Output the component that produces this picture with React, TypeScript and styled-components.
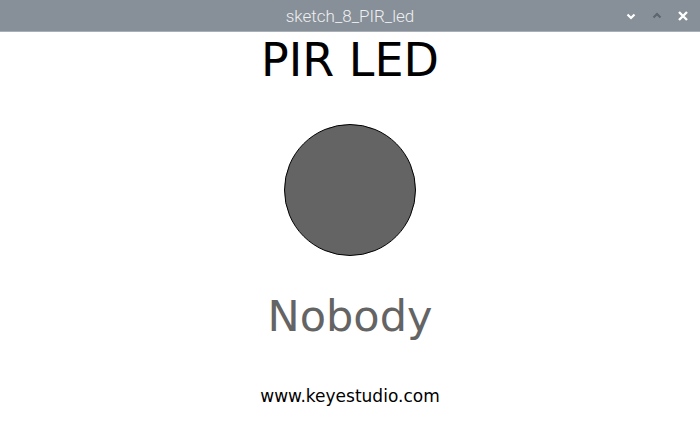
import React from "react";
import styled, { createGlobalStyle } from "styled-components";

const Global = createGlobalStyle`
  html, body { margin: 0; padding: 0; background: #ffffff; }
  body { width: 700px; height: 426px; overflow: hidden; }
`;

const Window = styled.div`
  width: 700px;
  height: 426px;
  display: flex;
  flex-direction: column;
  background: #ffffff;
`;

const TitleBar = styled.div`
  height: 32px;
  background: #878f98;
  border-bottom: 1px solid #a9afb6;
  display: grid;
  grid-template-columns: 1fr auto 1fr;
  align-items: center;
  box-sizing: border-box;
`;

const TitleText = styled.div`
  grid-column: 2;
  font-family: Roboto, "Liberation Sans", sans-serif;
  font-weight: 300;
  font-size: 17px;
  color: #eef0f2;
`;

const Controls = styled.div`
  grid-column: 3;
  justify-self: end;
  display: flex;
  align-items: center;
  gap: 12px;
  padding-right: 10px;
`;

const Ctrl = styled.svg<{ $dim?: boolean }>`
  width: 14px;
  height: 14px;
  display: block;
  color: ${(p) => (p.$dim ? "#5e656d" : "#ffffff")};
`;

const Content = styled.div`
  flex: 1;
  display: flex;
  flex-direction: column;
  align-items: center;
  font-family: "DejaVu Sans", sans-serif;
`;

const Heading = styled.div`
  font-size: 46px;
  line-height: 46px;
  color: #000000;
  margin-top: 5px;
`;

const Led = styled.div`
  width: 130px;
  height: 130px;
  border-radius: 50%;
  background: #646464;
  border: 1px solid #000000;
  margin-top: 41px;
`;

const Status = styled.div`
  font-size: 43px;
  line-height: 43px;
  color: #646464;
  margin-top: 39px;
`;

const Footer = styled.div`
  font-size: 17px;
  line-height: 18px;
  color: #000000;
  margin-top: 49px;
`;

export default function App() {
  return (
    <>
      <Global />
      <Window>
        <TitleBar>
          <TitleText>sketch_8_PIR_led</TitleText>
          <Controls>
            <Ctrl viewBox="0 0 14 14">
              <path d="M3.5 5.5 L7 9 L10.5 5.5" fill="none" stroke="currentColor" strokeWidth="2.2" />
            </Ctrl>
            <Ctrl viewBox="0 0 14 14" $dim>
              <path d="M3.5 8.5 L7 5 L10.5 8.5" fill="none" stroke="currentColor" strokeWidth="2.2" />
            </Ctrl>
            <Ctrl viewBox="0 0 14 14">
              <path d="M3 3 L11 11 M11 3 L3 11" fill="none" stroke="currentColor" strokeWidth="2.4" />
            </Ctrl>
          </Controls>
        </TitleBar>
        <Content>
          <Heading>PIR LED</Heading>
          <Led />
          <Status>Nobody</Status>
          <Footer>www.keyestudio.com</Footer>
        </Content>
      </Window>
    </>
  );
}
